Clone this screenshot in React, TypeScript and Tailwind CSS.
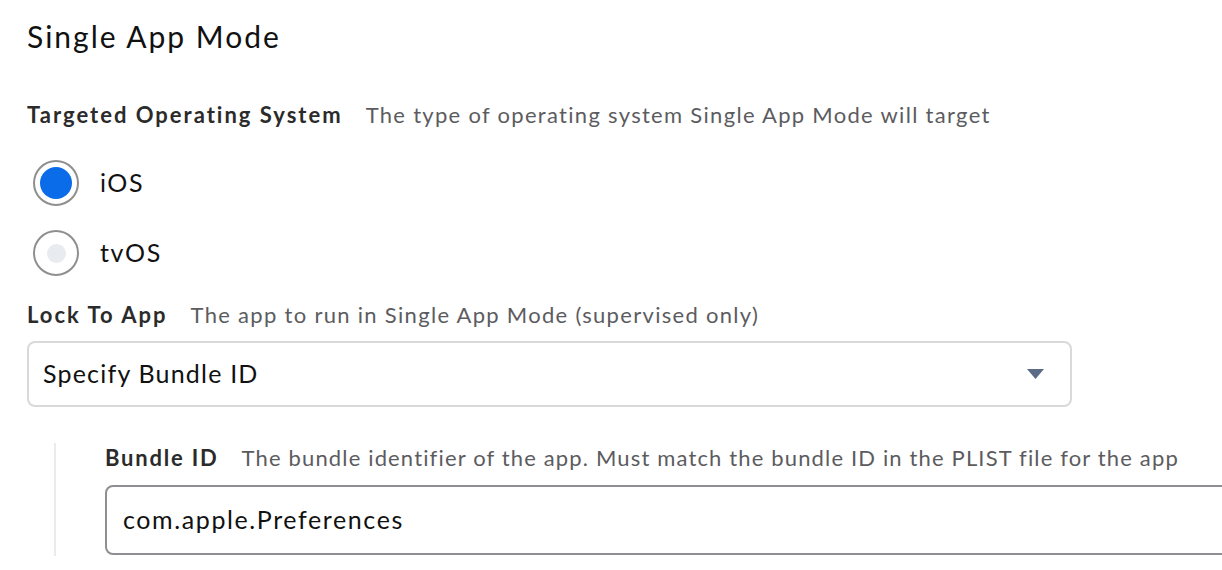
import React from "react";

const font = { fontFamily: "Lato, 'Noto Sans', sans-serif" };

function Radio({ checked, label }: { checked: boolean; label: string }) {
  return (
    <div className="flex items-center h-[46px] ml-[6px]">
      <div className="shrink-0 w-[46px] h-[46px] rounded-full border-2 border-[#8f8f8f] flex items-center justify-center bg-white">
        {checked ? (
          <div className="w-[32px] h-[32px] rounded-full bg-[#0a6ce8]" />
        ) : (
          <div className="w-[19px] h-[19px] rounded-full bg-[#e8ebef]" />
        )}
      </div>
      <span className="ml-[21px] text-[25px] tracking-[1.6px] text-[#111]">{label}</span>
    </div>
  );
}

export default function App() {
  return (
    <div
      className="w-[1222px] h-[570px] bg-white overflow-hidden pl-[27px] flex flex-col"
      style={font}
    >
      <div className="h-[72px] flex items-center text-[30px] tracking-[2px] text-[#111]">
        Single App Mode
      </div>
      <div className="mt-[22px] h-[40px] flex items-center text-[22px]">
        <span className="font-bold tracking-[2px] text-[#2b2b2b]">Targeted Operating System</span>
        <span className="ml-[23px] tracking-[1.3px] text-[#5c5c5f]">
          The type of operating system Single App Mode will target
        </span>
      </div>
      <div className="mt-[26px]">
        <Radio checked label="iOS" />
      </div>
      <div className="mt-[24px]">
        <Radio checked={false} label="tvOS" />
      </div>
      <div className="mt-[18px] h-[40px] flex items-center text-[22px]">
        <span className="font-bold tracking-[2px] text-[#2b2b2b]">Lock To App</span>
        <span className="ml-[23px] tracking-[1.3px] text-[#5c5c5f]">
          The app to run in Single App Mode (supervised only)
        </span>
      </div>
      <div className="mt-[7px] w-[1045px] h-[66px] border-2 border-[#d9d9d9] rounded-[8px] flex items-center justify-between pl-[14px] pr-[26px]">
        <span className="text-[25px] tracking-[1.2px] text-[#111]">Specify Bundle ID</span>
        <svg width="17" height="10" viewBox="0 0 17 10">
          <polygon points="0,0 17,0 8.5,10" fill="#5b6a87" />
        </svg>
      </div>
      <div className="mt-[36px] flex">
        <div className="shrink-0 ml-[27px] w-[2px] h-[113px] bg-[#ebebeb]" />
        <div className="ml-[49px] flex flex-col">
          <div className="h-[28px] flex items-center text-[22px] whitespace-nowrap">
            <span className="font-bold tracking-[1.8px] text-[#2b2b2b]">Bundle ID</span>
            <span className="ml-[23px] tracking-[1.15px] text-[#5c5c5f]">
              The bundle identifier of the app. Must match the bundle ID in the PLIST file for the app
            </span>
          </div>
          <div className="mt-[14px] w-[1160px] h-[70px] border-2 border-[#8e8e93] rounded-[8px] flex items-center pl-[16px]">
            <span className="text-[25px] tracking-[1.6px] text-[#111]">com.apple.Preferences</span>
          </div>
        </div>
      </div>
    </div>
  );
}
